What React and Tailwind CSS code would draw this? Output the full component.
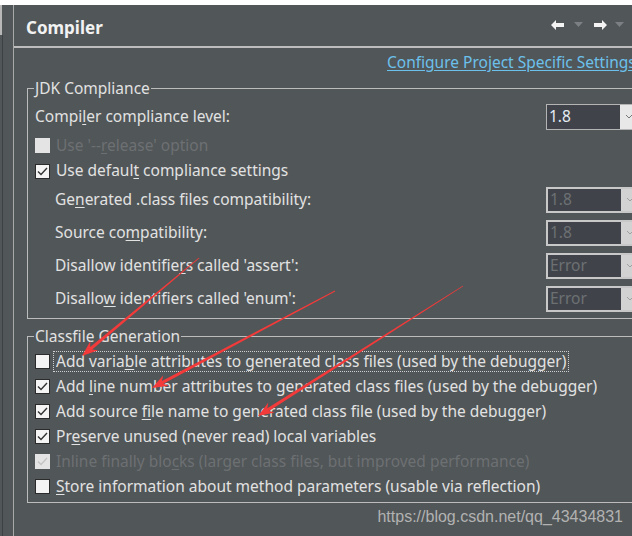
import React from 'react';

const FONT = { fontFamily: '"Noto Sans", "Open Sans", sans-serif' };

function Mn({ pre, u, post }) {
  return (
    <>
      {pre}
      <span className="underline underline-offset-2">{u}</span>
      {post}
    </>
  );
}

function Check({ checked, disabled }) {
  if (disabled) {
    return (
      <span className="w-[15px] h-[15px] shrink-0 bg-[#e4e4e4] flex items-center justify-center">
        {checked && (
          <svg width="11" height="9" viewBox="0 0 11 9">
            <path d="M1 4.5 L4 7.5 L10 1" fill="none" stroke="#c4c4c4" strokeWidth="1.4" />
          </svg>
        )}
      </span>
    );
  }
  return (
    <span className="w-[15px] h-[15px] shrink-0 bg-[#f4f4f4] border border-[#2b2b2b] flex items-center justify-center">
      {checked && (
        <svg width="11" height="9" viewBox="0 0 11 9">
          <path d="M1 4.5 L4 7.5 L10 1" fill="none" stroke="#333" strokeWidth="1.4" />
        </svg>
      )}
    </span>
  );
}

function Combo({ value, disabled }) {
  return (
    <div
      className={`ml-auto w-[100px] h-[26px] flex shrink-0 border-2 ${
        disabled ? 'border-[#c8c8c8]' : 'border-[#b4b4b4] border-[1.5px]'
      }`}
    >
      <div
        className={`w-[73px] h-full bg-[#40444a] flex items-center pl-[2px] text-[15.5px] ${
          disabled ? 'text-[#6d7073]' : 'text-[#e4ecf4]'
        }`}
      >
        {value}
      </div>
      <div className={`flex-1 ${disabled ? 'bg-[#d2d2d2]' : 'bg-[#e8e8e8]'} flex items-center pl-[6px]`}>
        <svg width="6" height="4" viewBox="0 0 6 4">
          <path d="M0 0 L3 3 L6 0" fill="none" stroke={disabled ? '#a0a0a0' : '#777'} strokeWidth="1" />
        </svg>
      </div>
    </div>
  );
}

function arrowPts(sx, sy, tx, ty) {
  const dx = tx - sx;
  const dy = ty - sy;
  const len = Math.hypot(dx, dy);
  const ux = dx / len;
  const uy = dy / len;
  const nx = -uy;
  const ny = ux;
  const hl = 16;
  const hw = 6;
  const bx = tx - ux * hl;
  const by = ty - uy * hl;
  const cx = tx - ux * (hl - 4);
  const cy = ty - uy * (hl - 4);
  const pts = [
    [sx + nx * 0.4, sy + ny * 0.4],
    [cx + nx * 1.6, cy + ny * 1.6],
    [bx + nx * hw, by + ny * hw],
    [tx, ty],
    [bx - nx * hw, by - ny * hw],
    [cx - nx * 1.6, cy - ny * 1.6],
    [sx - nx * 0.4, sy - ny * 0.4],
  ];
  return pts.map((p) => p.map((v) => v.toFixed(1)).join(',')).join(' ');
}

export default function App() {
  const label = 'text-[15.5px] text-[#e2e2e2] whitespace-nowrap';
  const dim = 'text-[15.5px] text-[#6d7073] whitespace-nowrap';

  return (
    <div className="w-[632px] h-[536px] bg-[#515658] overflow-hidden relative flex flex-col" style={FONT}>
      <div className="h-[5px] bg-white shrink-0" />
      <div className="flex flex-1 min-h-0">
        {/* left tree strip */}
        <div className="w-[14px] shrink-0 flex border-r border-[#a8a8a8] relative">
          <div className="w-[2px] h-[30px] bg-[#b8b8b8]" />
          <div className="w-[1px] bg-[#3e4245] mt-[30px]" />
        </div>

        {/* main panel */}
        <div className="flex-1 min-w-0 flex flex-col">
          <div className="h-[43px] shrink-0 flex items-center pl-[12px] pr-[8px] pt-[4px] border-b-2 border-[#bdbdbd]">
            <span className="text-[17px] font-bold text-[#f2f2f2]">Compiler</span>
            <div className="ml-auto flex items-center mt-[-6px]">
              <svg width="14" height="10" viewBox="0 0 14 10" className="ml-[4px]">
                <path d="M0 5 L5 0 L5 3 L13 3 L13 7 L5 7 L5 10 Z" fill="#f4f4f4" />
              </svg>
              <svg width="9" height="5" viewBox="0 0 9 5" className="ml-[9px]">
                <path d="M0 0 L9 0 L4.5 5 Z" fill="#7c8084" />
              </svg>
              <svg width="14" height="10" viewBox="0 0 14 10" className="ml-[10px]">
                <path d="M14 5 L9 0 L9 3 L1 3 L1 7 L9 7 L9 10 Z" fill="#f4f4f4" />
              </svg>
              <svg width="9" height="5" viewBox="0 0 9 5" className="ml-[8px]">
                <path d="M0 0 L9 0 L4.5 5 Z" fill="#7c8084" />
              </svg>
            </div>
          </div>

          <div className="h-[30px] shrink-0 flex items-center pl-[373px]">
            <span className="text-[15.5px] text-[#6cc0ec] underline underline-offset-2 whitespace-nowrap">
              Configure Project Specific Settings...
            </span>
          </div>

          {/* JDK Compliance */}
          <fieldset className="ml-[13px] w-[680px] border border-[#bcbcbc] pl-[7px] pr-0 pb-[6px] shrink-0">
            <legend className="text-[15.5px] text-[#e2e2e2] px-[1px] ml-[-1px] leading-[20px]">JDK Compliance</legend>
            <div className="w-[611px] flex flex-col">
              <div className="h-[26px] flex items-center mt-[6px]">
                <span className={label}>
                  <Mn pre="Compi" u="l" post="er compliance level:" />
                </span>
                <Combo value="1.8" />
              </div>
              <div className="h-[25px] flex items-center gap-[6px] mt-[3px]">
                <Check disabled />
                <span className={dim}>
                  <Mn pre="Use '--" u="r" post="elease' option" />
                </span>
              </div>
              <div className="h-[26px] flex items-center gap-[6px]">
                <Check checked />
                <span className={label}>
                  <Mn pre="Use defaul" u="t" post=" compliance settings" />
                </span>
              </div>
              <div className="h-[26px] flex items-center pl-[20px] mt-[3px]">
                <span className={label}>
                  <Mn pre="Ge" u="n" post="erated .class files compatibility:" />
                </span>
                <Combo value="1.8" disabled />
              </div>
              <div className="h-[26px] flex items-center pl-[20px] mt-[7px]">
                <span className={label}>
                  <Mn pre="Source co" u="m" post="patibility:" />
                </span>
                <Combo value="1.8" disabled />
              </div>
              <div className="h-[26px] flex items-center pl-[20px] mt-[7px]">
                <span className={label}>
                  <Mn pre="Disallow identifie" u="r" post="s called 'assert':" />
                </span>
                <Combo value="Error" disabled />
              </div>
              <div className="h-[26px] flex items-center pl-[20px] mt-[7px]">
                <span className={label}>
                  <Mn pre="Disallo" u="w" post=" identifiers called 'enum':" />
                </span>
                <Combo value="Error" disabled />
              </div>
            </div>
          </fieldset>

          {/* Classfile Generation */}
          <fieldset className="ml-[13px] mt-[7px] w-[680px] border border-[#bcbcbc] pl-[7px] pb-[3px] shrink-0">
            <legend className="text-[15.5px] text-[#e2e2e2] px-[1px] ml-[-1px] leading-[20px]">Classfile Generation</legend>
            <div className="flex flex-col mt-[3px]">
              <div className="h-[25px] flex items-center gap-[4px]">
                <Check />
                <span className={`${label} outline-1 outline-dotted outline-[#d0d0d0] px-[2px] leading-[19px]`}>
                  <Mn pre="Add varia" u="b" post="le attributes to generated class files (used by the debugger)" />
                </span>
              </div>
              <div className="h-[25px] flex items-center gap-[6px]">
                <Check checked />
                <span className={label}>
                  <Mn pre="Add " u="l" post="ine number attributes to generated class files (used by the debugger)" />
                </span>
              </div>
              <div className="h-[25px] flex items-center gap-[6px]">
                <Check checked />
                <span className={label}>
                  <Mn pre="Add source " u="f" post="ile name to generated class file (used by the debugger)" />
                </span>
              </div>
              <div className="h-[25px] flex items-center gap-[6px]">
                <Check checked />
                <span className={label}>
                  <Mn pre="Pr" u="e" post="serve unused (never read) local variables" />
                </span>
              </div>
              <div className="h-[25px] flex items-center gap-[6px]">
                <Check checked disabled />
                <span className={dim}>
                  <Mn pre="Inline finally blo" u="c" post="ks (larger class files, but improved performance)" />
                </span>
              </div>
              <div className="h-[25px] flex items-center gap-[6px]">
                <Check />
                <span className={label}>
                  <Mn pre="" u="S" post="tore information about method parameters (usable via reflection)" />
                </span>
              </div>
            </div>
          </fieldset>

          <div className="flex justify-end pr-[9px] mt-[2px]">
            <span
              className="text-[16px] text-[#b2b2b2] whitespace-nowrap"
              style={{ fontFamily: '"Liberation Sans", Arial, sans-serif' }}
            >
              https://blog.csdn.net/qq_43434831
            </span>
          </div>
        </div>
      </div>

      {/* red annotation arrows */}
      <svg className="absolute inset-0 pointer-events-none" width="632" height="536" viewBox="0 0 632 536">
        <polygon points={arrowPts(199, 258, 82, 356)} fill="#f23a3a" />
        <polygon points={arrowPts(335, 291, 152, 388)} fill="#f23a3a" />
        <polygon points={arrowPts(463, 286, 258, 416)} fill="#f23a3a" />
      </svg>
    </div>
  );
}
